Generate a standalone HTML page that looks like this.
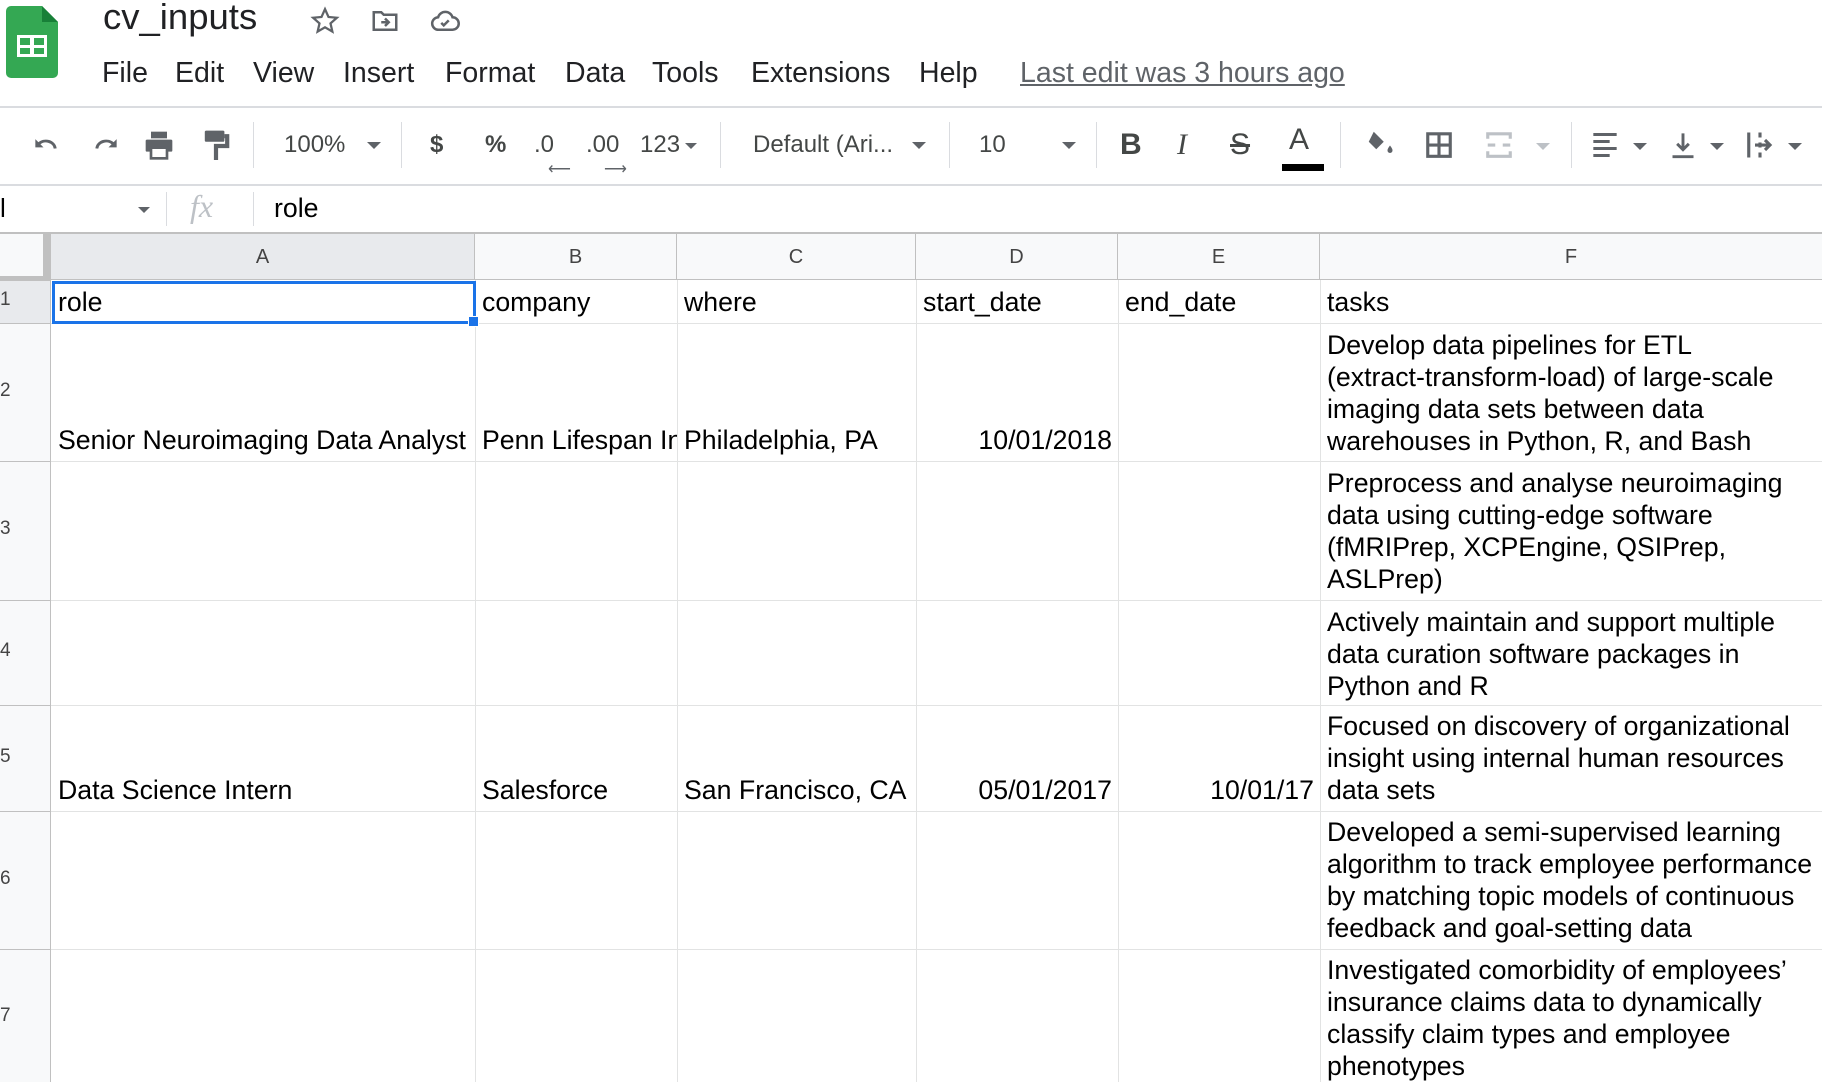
<!DOCTYPE html>
<html><head><meta charset="utf-8"><style>
*{margin:0;padding:0;box-sizing:border-box}
body{width:1822px;height:1082px;overflow:hidden;background:#fff;font-family:"Liberation Sans",Arial,sans-serif;position:relative;color:#000}
.a{position:absolute}
.menu{position:absolute;top:57px;font-size:28.5px;color:#202124}
.tb{position:absolute;top:145px;transform:translateY(-50%);color:#444746;font-size:24px}
.sep{position:absolute;top:122px;width:1px;height:46px;background:#dadce0}
.arr{position:absolute;width:0;height:0;border-left:7px solid transparent;border-right:7px solid transparent;border-top:7px solid #5f6368}
.vl{position:absolute;width:1px;background:#e2e3e3;top:280px;bottom:0}
.hl{position:absolute;height:1px;background:#e2e3e3;left:51px;right:0}
.ch{position:absolute;top:234px;height:46px;line-height:46px;text-align:center;font-size:20px;color:#444;border-right:1px solid #c0c0c0}
.rn{position:absolute;left:0;width:44px;font-size:19px;color:#444}
.c{position:absolute;font-size:26.7px;line-height:32px;padding:0 6px}
</style></head><body>
<svg class="a" style="left:6px;top:6px" width="52" height="72" viewBox="0 0 52 72">
<path d="M5 0H36L52 16V67a5 5 0 0 1-5 5H5a5 5 0 0 1-5-5V5a5 5 0 0 1 5-5z" fill="#34a853"/>
<path d="M36 0V16H52z" fill="#188038"/>
<rect x="11" y="29" width="30" height="22" fill="#fff"/>
<rect x="14" y="32" width="10" height="7" fill="#34a853"/><rect x="28" y="32" width="10" height="7" fill="#34a853"/>
<rect x="14" y="42" width="10" height="6" fill="#34a853"/><rect x="28" y="42" width="10" height="6" fill="#34a853"/>
</svg>
<div class="a" style="left:103px;top:-4px;font-size:36.5px;color:#202124">cv_inputs</div>
<svg class="a" style="left:310px;top:6px" width="30" height="30" viewBox="0 0 24 24"><path d="M12 2.5l2.8 6.3 6.7.6-5.1 4.5 1.5 6.6L12 17l-5.9 3.5 1.5-6.6L2.5 9.4l6.7-.6z" fill="none" stroke="#5f6368" stroke-width="1.8"/></svg>
<svg class="a" style="left:369px;top:6px" width="32" height="30" viewBox="0 0 24 24"><path d="M3 5h6l2 2h10v12H3z" fill="none" stroke="#5f6368" stroke-width="2"/><path d="M9 13h6M12 10l3 3-3 3" fill="none" stroke="#5f6368" stroke-width="2"/></svg>
<svg class="a" style="left:428px;top:6px" width="34" height="30" viewBox="0 0 24 24"><path d="M7 19a5 5 0 0 1-.5-10A6 6 0 0 1 18 9a4.5 4.5 0 0 1 0 10z" fill="none" stroke="#5f6368" stroke-width="2"/><path d="M9 13.5l2 2 4-4" fill="none" stroke="#5f6368" stroke-width="2"/></svg>
<div class="menu" style="left:102px">File</div>
<div class="menu" style="left:175px">Edit</div>
<div class="menu" style="left:253px">View</div>
<div class="menu" style="left:343px">Insert</div>
<div class="menu" style="left:445px">Format</div>
<div class="menu" style="left:565px">Data</div>
<div class="menu" style="left:652px">Tools</div>
<div class="menu" style="left:751px">Extensions</div>
<div class="menu" style="left:919px">Help</div>
<div class="menu" style="left:1020px;color:#5f6368;text-decoration:underline">Last edit was 3 hours ago</div>
<div class="a" style="left:0;right:0;top:106px;height:2px;background:#dadce0"></div>
<svg class="a" style="left:31px;top:131px" width="32" height="28" viewBox="0 0 24 24"><path d="M5 11a8 7 0 0 1 14 4" fill="none" stroke="#5f6368" stroke-width="2.5"/><path d="M2 7v7h7z" fill="#5f6368"/></svg>
<svg class="a" style="left:89px;top:131px" width="32" height="28" viewBox="0 0 24 24"><path d="M19 11a8 7 0 0 0-14 4" fill="none" stroke="#5f6368" stroke-width="2.5"/><path d="M22 7v7h-7z" fill="#5f6368"/></svg>
<svg class="a" style="left:142px;top:129px" width="34" height="32" viewBox="0 0 24 24"><rect x="6" y="2" width="12" height="5" fill="#5f6368"/><rect x="2" y="8" width="20" height="9" rx="1" fill="#5f6368"/><rect x="6" y="14" width="12" height="8" fill="#fff" stroke="#5f6368" stroke-width="2"/></svg>
<svg class="a" style="left:202px;top:129px" width="28" height="34" viewBox="0 0 20 24"><rect x="2" y="1" width="14" height="8" rx="1" fill="#5f6368"/><path d="M16 5h2v7h-8v10" fill="none" stroke="#5f6368" stroke-width="3"/></svg>
<div class="sep" style="left:253px"></div>
<div class="tb" style="left:284px">100%</div>
<div class="arr" style="left:367px;top:142px"></div>
<div class="sep" style="left:401px"></div>
<div class="tb" style="left:430px;font-weight:bold">$</div>
<div class="tb" style="left:485px;font-weight:bold">%</div>
<div class="tb" style="left:534px">.0</div>
<div class="a" style="left:548px;top:159px;color:#5f6368;font-size:16px">⟵</div>
<div class="tb" style="left:586px">.00</div>
<div class="a" style="left:604px;top:159px;color:#5f6368;font-size:16px">⟶</div>
<div class="tb" style="left:640px">123</div>
<div class="arr" style="left:685px;top:143px;border-width:6px 6px 0"></div>
<div class="sep" style="left:720px"></div>
<div class="tb" style="left:753px">Default (Ari...</div>
<div class="arr" style="left:912px;top:142px"></div>
<div class="sep" style="left:949px"></div>
<div class="tb" style="left:979px">10</div>
<div class="arr" style="left:1062px;top:142px"></div>
<div class="sep" style="left:1096px"></div>
<div class="tb" style="left:1120px;font-weight:bold;font-size:30px">B</div>
<div class="tb" style="left:1177px;font-style:italic;font-size:30px;font-family:'Liberation Serif',serif">I</div>
<div class="tb" style="left:1230px;font-size:30px;text-decoration:line-through">S</div>
<div class="tb" style="left:1289px;font-size:30px;top:140px">A</div>
<div class="a" style="left:1282px;top:164px;width:42px;height:7px;background:#000"></div>
<div class="sep" style="left:1340px"></div>
<svg class="a" style="left:1364px;top:128px" width="32" height="30" viewBox="0 0 24 24"><path d="M7 3l8 8-6 6-6-6z" fill="#5f6368"/><path d="M20 14c1.5 2 2 3 2 4a2 2 0 0 1-4 0c0-1 .5-2 2-4z" fill="#5f6368"/></svg>
<svg class="a" style="left:1424px;top:130px" width="30" height="30" viewBox="0 0 24 24"><path d="M3 3h18v18H3zM12 3v18M3 12h18" fill="none" stroke="#5f6368" stroke-width="2.5"/></svg>
<svg class="a" style="left:1484px;top:130px" width="30" height="30" viewBox="0 0 24 24"><path d="M3 7V3h18v4M3 17v4h18v-4M3 12h6M21 12h-6" fill="none" stroke="#bdc1c6" stroke-width="2.5"/></svg>
<div class="arr" style="left:1536px;top:143px;border-top-color:#bdc1c6"></div>
<div class="sep" style="left:1571px"></div>
<svg class="a" style="left:1590px;top:131px" width="30" height="28" viewBox="0 0 24 24"><path d="M2 3h20M2 9h14M2 15h20M2 21h14" stroke="#5f6368" stroke-width="2.5"/></svg>
<div class="arr" style="left:1633px;top:143px"></div>
<svg class="a" style="left:1669px;top:130px" width="28" height="30" viewBox="0 0 24 24"><path d="M12 2v14M7 11l5 5 5-5M3 22h18" fill="none" stroke="#5f6368" stroke-width="2.5"/></svg>
<div class="arr" style="left:1710px;top:143px"></div>
<svg class="a" style="left:1745px;top:130px" width="30" height="30" viewBox="0 0 24 24"><path d="M3 2v20M12 2v4M12 10v4M12 18v4M8 12h12M16 8l4 4-4 4" fill="none" stroke="#5f6368" stroke-width="2.5"/></svg>
<div class="arr" style="left:1788px;top:143px"></div>
<div class="a" style="left:0;right:0;top:184px;height:2px;background:#dadce0"></div>
<div class="a" style="left:0;top:193px;font-size:26px">l</div>
<div class="arr" style="left:138px;top:207px;border-width:6px 6px 0"></div>
<div class="a" style="left:166px;top:192px;width:1px;height:34px;background:#dadce0"></div>
<div class="a" style="left:190px;top:188px;font-size:32px;font-style:italic;font-family:'Liberation Serif',serif;color:#bdc1c6">fx</div>
<div class="a" style="left:253px;top:192px;width:1px;height:34px;background:#dadce0"></div>
<div class="a" style="left:274px;top:193px;font-size:26.7px">role</div>
<div class="a" style="left:0;right:0;top:232px;height:2px;background:#c0c0c0"></div>
<div class="a" style="left:0;top:234px;width:51px;height:46px;background:#f8f9fa"></div>
<div class="a" style="left:43px;top:234px;width:8px;height:50px;background:#c0c0c0"></div>
<div class="a" style="left:0;top:276px;width:51px;height:5px;background:#c0c0c0"></div>
<div class="a" style="left:51px;top:234px;right:0;height:46px;background:#f8f9fa"></div>
<div class="ch" style="left:51px;width:424px;background:#e8eaed">A</div>
<div class="ch" style="left:475px;width:202px">B</div>
<div class="ch" style="left:677px;width:239px">C</div>
<div class="ch" style="left:916px;width:202px">D</div>
<div class="ch" style="left:1118px;width:202px">E</div>
<div class="ch" style="left:1320px;width:502px;border:none">F</div>
<div class="a" style="left:51px;right:0;top:279px;height:1px;background:#c0c0c0"></div>
<div class="a" style="left:0;top:281px;width:51px;bottom:0;background:#f8f9fa;border-right:1px solid #c0c0c0"></div>
<div class="a" style="left:0;top:281px;width:51px;height:42px;background:#e8eaed;border-right:1px solid #c0c0c0"></div>
<div class="rn" style="top:289px">1</div>
<div class="rn" style="top:380px">2</div>
<div class="rn" style="top:518px">3</div>
<div class="rn" style="top:640px">4</div>
<div class="rn" style="top:746px">5</div>
<div class="rn" style="top:868px">6</div>
<div class="rn" style="top:1005px">7</div>
<div class="vl" style="left:475px"></div><div class="vl" style="left:677px"></div><div class="vl" style="left:916px"></div><div class="vl" style="left:1118px"></div><div class="vl" style="left:1320px"></div>
<div class="hl" style="top:323px"></div><div class="hl" style="top:461px"></div><div class="hl" style="top:600px"></div><div class="hl" style="top:705px"></div><div class="hl" style="top:811px"></div><div class="hl" style="top:949px"></div>
<div class="a" style="left:0;width:51px;height:1px;background:#c0c0c0;top:323px"></div><div class="a" style="left:0;width:51px;height:1px;background:#c0c0c0;top:461px"></div><div class="a" style="left:0;width:51px;height:1px;background:#c0c0c0;top:600px"></div><div class="a" style="left:0;width:51px;height:1px;background:#c0c0c0;top:705px"></div><div class="a" style="left:0;width:51px;height:1px;background:#c0c0c0;top:811px"></div><div class="a" style="left:0;width:51px;height:1px;background:#c0c0c0;top:949px"></div>
<div class="c" style="left:52px;top:286px">role</div>
<div class="c" style="left:476px;top:286px">company</div>
<div class="c" style="left:678px;top:286px">where</div>
<div class="c" style="left:917px;top:286px">start_date</div>
<div class="c" style="left:1119px;top:286px">end_date</div>
<div class="c" style="left:1321px;top:286px">tasks</div>
<div class="a" style="left:52px;top:281px;width:424px;height:43px;border:3px solid #1a73e8"></div>
<div class="a" style="left:468px;top:316px;width:11px;height:11px;background:#1a73e8;border:1px solid #fff"></div>
<div class="c" style="left:52px;top:424px;white-space:nowrap">Senior Neuroimaging Data Analyst</div>
<div class="c" style="left:476px;top:424px;width:201px;overflow:hidden;white-space:nowrap">Penn Lifespan Informatics</div>
<div class="c" style="left:678px;top:424px">Philadelphia, PA</div>
<div class="c" style="left:917px;top:424px;width:201px;text-align:right">10/01/2018</div>
<div class="c" style="left:1321px;top:329px;width:501px;white-space:nowrap">Develop data pipelines for ETL<br>(extract-transform-load) of large-scale<br>imaging data sets between data<br>warehouses in Python, R, and Bash</div>
<div class="c" style="left:1321px;top:467px;width:501px">Preprocess and analyse neuroimaging data using cutting-edge software (fMRIPrep, XCPEngine, QSIPrep, ASLPrep)</div>
<div class="c" style="left:1321px;top:606px;width:501px">Actively maintain and support multiple data curation software packages in Python and R</div>
<div class="c" style="left:52px;top:774px">Data Science Intern</div>
<div class="c" style="left:476px;top:774px">Salesforce</div>
<div class="c" style="left:678px;top:774px">San Francisco, CA</div>
<div class="c" style="left:917px;top:774px;width:201px;text-align:right">05/01/2017</div>
<div class="c" style="left:1119px;top:774px;width:201px;text-align:right">10/01/17</div>
<div class="c" style="left:1321px;top:710px;width:501px">Focused on discovery of organizational insight using internal human resources data sets</div>
<div class="c" style="left:1321px;top:816px;width:501px">Developed a semi-supervised learning algorithm to track employee performance by matching topic models of continuous feedback and goal-setting data</div>
<div class="c" style="left:1321px;top:954px;width:501px">Investigated comorbidity of employees’ insurance claims data to dynamically classify claim types and employee phenotypes</div>
</body></html>
